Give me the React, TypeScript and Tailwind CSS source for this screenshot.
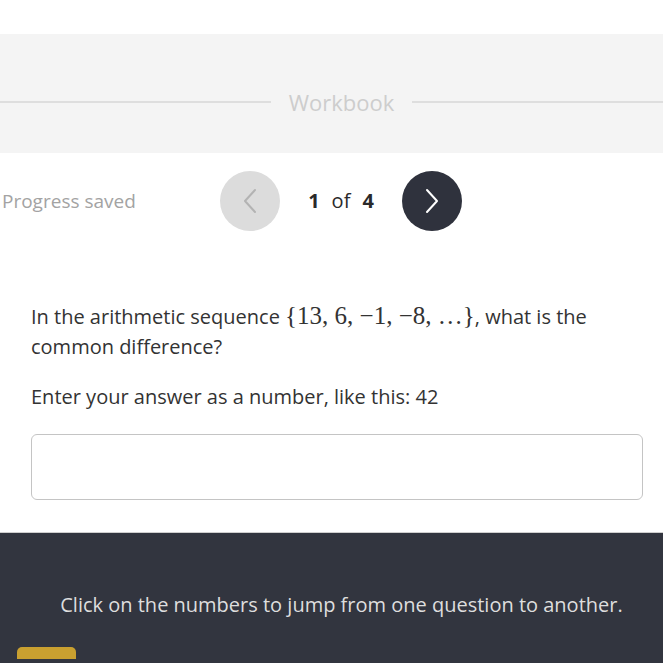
import React from 'react';

function Chevron({ dir, className }: { dir: 'left' | 'right'; className?: string }) {
  return (
    <svg width="14" height="26" viewBox="0 0 14 26" fill="none" className={className}>
      <path
        d={dir === 'left' ? 'M12 2 L2 13 L12 24' : 'M2 2 L12 13 L2 24'}
        stroke="currentColor"
        strokeWidth="2"
        strokeLinecap="round"
        strokeLinejoin="round"
      />
    </svg>
  );
}

export default function App() {
  return (
    <div className="w-[663px] h-[663px] overflow-hidden bg-white font-['Open_Sans',sans-serif]">
      <div className="w-[683px]">
        <div className="h-[34px]" />

        {/* workbook header band */}
        <div className="h-[119px] bg-[#f4f4f4] pt-[56px]">
          <div className="flex items-center">
            <div className="h-[2px] flex-1 bg-[#dedede]" />
            <span className="px-[18px] text-[22px] leading-[24px] text-[#cdcdcd]">Workbook</span>
            <div className="h-[2px] flex-1 bg-[#dedede]" />
          </div>
        </div>

        {/* progress row */}
        <div className="mt-[18px] flex h-[60px] items-center">
          <span className="w-[220px] pl-[2px] text-[19px] text-[#a3a3a3]">Progress saved</span>
          <button className="flex h-[60px] w-[60px] items-center justify-center rounded-full bg-[#dcdcdc] text-[#b3b3b3]">
            <Chevron dir="left" />
          </button>
          <div className="flex w-[122px] items-center justify-center gap-[12px] text-[20px] text-[#2a2a2a]">
            <span className="font-bold">1</span>
            <span>of</span>
            <span className="font-bold">4</span>
          </div>
          <button className="flex h-[60px] w-[60px] items-center justify-center rounded-full bg-[#2f323d] text-white">
            <Chevron dir="right" />
          </button>
        </div>

        {/* question */}
        <div className="w-[663px] px-[31px] pt-[70px]">
          <p className="text-[20px] leading-[30px] text-[#333]">
            In the arithmetic sequence{' '}
            <span className="font-['Liberation_Serif',serif] text-[25px]">
              {'{'}13, 6, −1, −8, …{'}'}
            </span>
            , what is the common difference?
          </p>
          <p className="mt-[20px] text-[20px] leading-[30px] text-[#333]">
            Enter your answer as a number, like this: 42
          </p>
          <input
            type="text"
            className="mt-[22px] h-[66px] w-[612px] rounded-[6px] border-[1.5px] border-[#c4c4c4] bg-white px-3 outline-none"
          />
        </div>

        {/* footer */}
        <div className="mt-[32px] h-[131px] border-t border-[#cfcfcf] bg-[#32353f] pt-[58px]">
          <p className="text-center text-[20px] leading-[28px] text-[#dedede]">
            Click on the numbers to jump from one question to another.
          </p>
          <div className="ml-[17px] mt-[28px] h-[12px] w-[59px] rounded-t-[5px] bg-[#c9a030]" />
        </div>
      </div>
    </div>
  );
}
